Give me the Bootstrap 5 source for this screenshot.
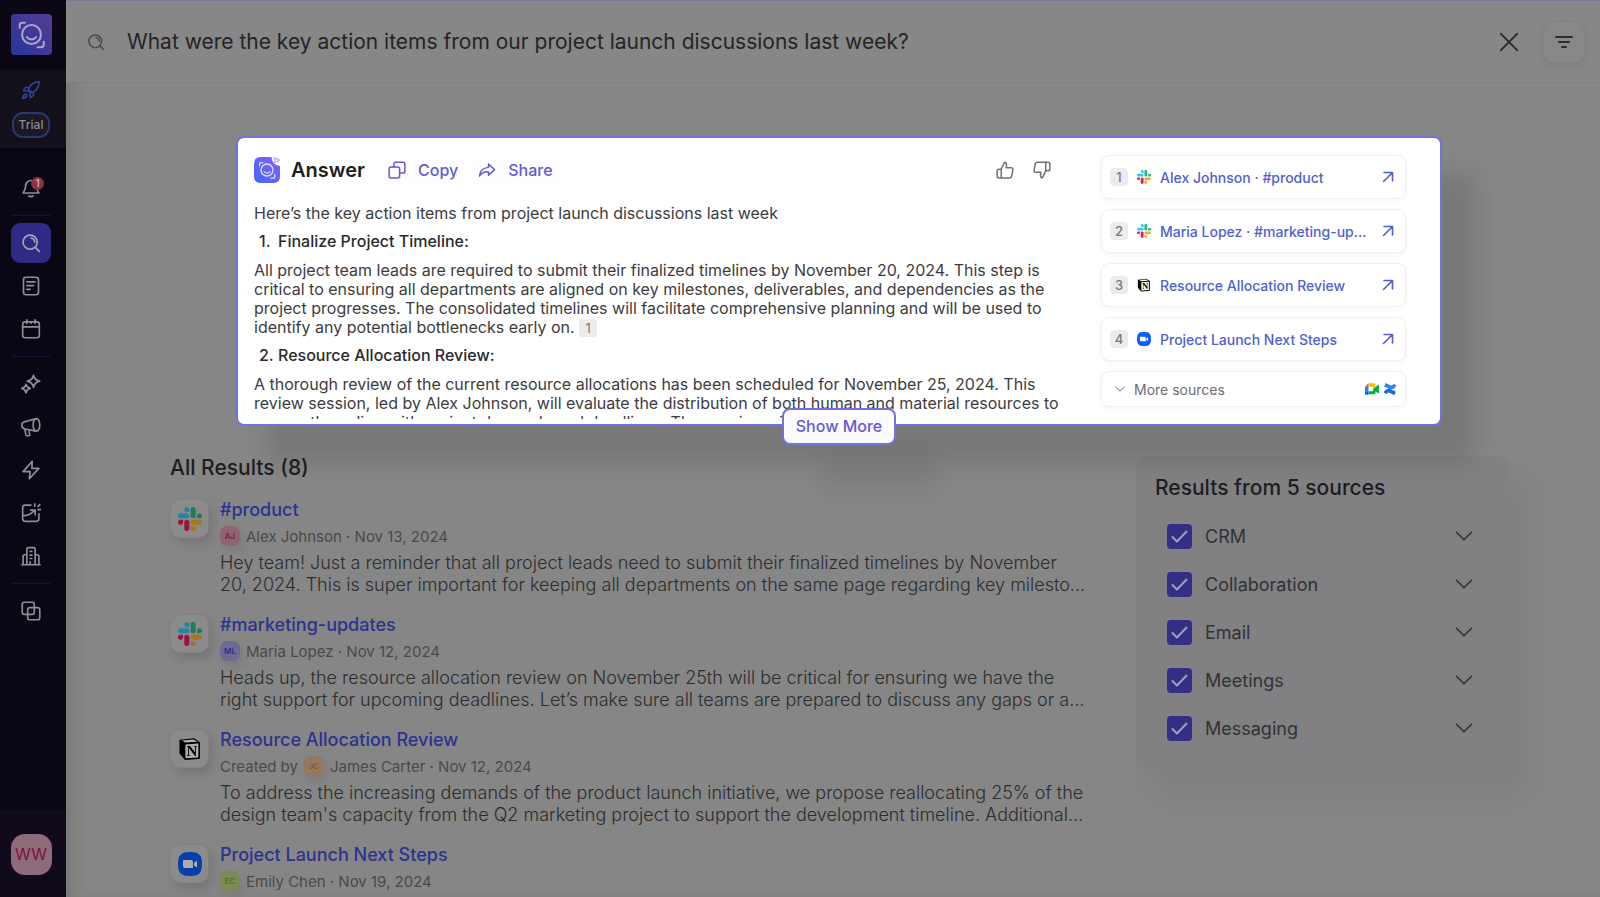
<!DOCTYPE html>
<html lang="en">
<head>
<meta charset="utf-8">
<meta name="viewport" content="width=device-width, initial-scale=1">
<title>Search results</title>
<link href="https://cdn.jsdelivr.net/npm/bootstrap@5.3.0/dist/css/bootstrap.min.css" rel="stylesheet">
<style>
:root{--page:#868686;--ink:#1d1d1f;--body:#3c3c3e;--muted:#4a4a4b;--link:#2b338f;--violet:#6459d6;--blue:#4f5fd3}
body{background:var(--page);color:var(--body);font-family:Inter,"Liberation Sans",sans-serif;font-size:16px;line-height:19px}
a{text-decoration:none}
.ico{fill:none;stroke:currentColor;stroke-width:2;stroke-linecap:round;stroke-linejoin:round;flex:none;display:block}
.s14{width:14px;height:14px}.s18{width:18px;height:18px}.s20{width:20px;height:20px}.s24{width:24px;height:24px}
/* side rail */
.rail{width:66px;background:#080713;color:#8f8d96}
.rail>div{padding-right:4px}
.rail-top{height:70px;padding-top:14px;background:#0b0714}
.rail-trial{height:78px;background:#13101b;color:#343f94;padding-top:10px;padding-bottom:10px}
.pill{width:38px;height:26px;border:2px solid #2c3770;border-radius:11px;background:#1a1824;color:#8f8d96;font-size:12px;line-height:22px;font-weight:500;padding:0}
.rail-btn{width:40px;height:40px;border:0;border-radius:9px;background:none;color:inherit;padding:0}
.rail-btn.current{background:#2f2a83;color:#a5a3b8}
.rail-rule{width:40px;height:1px;background:#15133a;margin:7px 0}
.stack3{gap:3px}
.bell-badge{top:9px;left:20px;width:13px;height:13px;border-radius:50%;background:#922f49;color:#bdb0b6;font-size:10px;line-height:13px;font-weight:600}
.rail-foot{height:87px;background:#100a1b;padding-top:24px}
.who{width:41px;height:41px;border:0;border-radius:14px;background:#8e6b7b;color:#7d1240;font-size:16px;padding:0}
/* top bar */
.topbar{height:83px;border-bottom:1px solid #7f7f7f;border-top:1px solid #7a7a8e;padding:0 15px 0 21px;background:#878787}
.query{background:none;border:0;color:#242424;font-size:21px;outline:0;padding:0;margin-left:22px}
.plain{background:none;border:0;padding:0;color:inherit}
.filter-btn{width:42px;height:42px;border:1px solid #808080;border-radius:9px;background:#888;color:#2e2e2e;margin-left:24px;box-shadow:0 4px 8px rgba(0,0,0,.04)}
.main-col{box-shadow:inset 12px 0 16px -8px rgba(0,0,0,.12)}
.content{padding:53px 92px 0 104px}
/* answer */
.answer{margin:0 66px;height:290px;background:#fff;border:2px solid #7272df;border-radius:8px;padding:16px 34px 0 16px;box-shadow:32px 38px 22px rgba(0,0,0,.11)}
.answer-copy{height:265px;overflow:hidden;margin-right:38px}
.answer-head{height:32px;margin-bottom:18px}
.answer-head h1{font-size:20px;line-height:26px;font-weight:600;color:#1e1e1e;margin:0 15px 0 11px}
.act{color:var(--violet);font-weight:500;font-size:16px;background:#fefdff;border:0;border-radius:6px;padding:4px 8px;gap:12px}
.votes{gap:19px;color:#707075;margin-right:12px}
.answer-copy p{margin:0 0 9px}
.answer-copy h2{font-size:16px;line-height:19px;font-weight:500;color:#2a2a2c;margin:0 0 10px 5px}
.answer-copy h2 span{width:19px}
.chip{display:inline-block;width:18px;height:18px;border-radius:4px;background:#ececec;color:#777;font-size:13px;line-height:18px;text-align:center;flex:none}
.sources{width:305px;gap:10px;font-size:14px;padding-top:1px}
.source{height:44px;border:1px solid #f0f0f1;border-radius:8px;padding:0 10px 0 8px;color:var(--blue);font-weight:500;box-shadow:0 2px 6px rgba(0,0,0,.04);background:#fff}
.source .app{margin:0 9px}
.source.more{height:36px;color:#6e6e70;font-weight:400;padding:0 8px 0 12px}
.show-more{position:absolute;left:50%;bottom:-21px;transform:translateX(-50%);height:37px;width:114px;padding:0;border:2px solid #7272df;border-radius:8px;background:#fcfbff;color:var(--violet);font-weight:500;font-size:16px;white-space:nowrap;box-shadow:40px 46px 22px rgba(0,0,0,.06)}
/* results */
.lower{gap:51px}
.h-res{font-size:21px;line-height:24px;font-weight:500;color:var(--ink)}
.all-h{margin:30px 0 17px}
.result{gap:11px;margin-bottom:16px}
.tile{width:39px;height:39px;border-radius:10px;background:#8b8b8b;border:1px solid #828282;margin-top:2px;box-shadow:4px 6px 10px rgba(0,0,0,.12);flex:none}
.tile svg{filter:brightness(.68)}
.result h3{font-size:18px;line-height:26px;font-weight:500;margin:0}
.result h3 a{color:var(--link)}
.meta{height:26px;font-size:15px;color:var(--muted);gap:6px}
.ava{width:20px;height:20px;border-radius:7px;font-size:8px;line-height:20px;font-weight:600;text-align:center;box-shadow:3px 5px 8px rgba(0,0,0,.08)}
.result p{font-size:18px;font-weight:300;line-height:22px;margin:3px 0 0;color:#2c2c2e;white-space:nowrap}
.results-col{min-width:0}
.facets{width:372px;height:314px;margin-top:30px;border-radius:10px;background:#818083;padding:20px 34px 0 19px;box-shadow:18px 24px 30px rgba(0,0,0,.05)}
.facets fieldset{margin:12px 0 0 12px}
.facet{height:48px;font-size:18px;color:#323234}
.facet .form-check-input{width:25px;height:25px;margin:0 13px 0 0;border:0;border-radius:4px;float:none}
.facet .form-check-input:checked{background-color:#352e88;background-image:url("data:image/svg+xml,%3csvg xmlns='http://www.w3.org/2000/svg' viewBox='0 0 25 25'%3e%3cpath d='M5.5 13 10 17.500 19.500 7.500' fill='none' stroke='%23a09fb4' stroke-width='2' stroke-linecap='round' stroke-linejoin='round'/%3e%3c/svg%3e")}
</style>
</head>
<body class="vh-100 overflow-hidden">
<svg class="position-absolute" width="0" height="0" aria-hidden="true">
  <linearGradient id="gDim" x1="0" y1="1" x2="1" y2="0"><stop stop-color="#24389a"/><stop offset=".5" stop-color="#3f3798"/><stop offset="1" stop-color="#563c93"/></linearGradient>
  <linearGradient id="gLit" x1="0" y1="1" x2="1" y2="0"><stop stop-color="#4168f5"/><stop offset="1" stop-color="#8560ff"/></linearGradient>
  <symbol id="face" viewBox="0 0 40 40"><circle cx="20" cy="20" r="9.200"/><path d="M15.500 22.500c2.500 3 6.500 3 9 0M8.500 13.500V11q0-2.500 2.500-2.500h2.500M32 27v2.500q0 3-3 3h-3"/></symbol>
  <symbol id="search" viewBox="0 0 24 24"><circle cx="11" cy="11" r="8.500"/><path d="m17.500 17.500 4.500 4.500M12 6a5.500 5.500 0 0 1 4.500 5"/></symbol>
  <symbol id="down" viewBox="0 0 24 24"><path d="m3 7.500 9 9 9-9"/></symbol>
  <symbol id="out" viewBox="0 0 14 14"><path stroke-width="1.600" d="M2.500 11.500 11.500 2.500M3 2.500h8.500V11"/></symbol>
  <symbol id="slack" viewBox="0 0 24 24"><g stroke="none"><path fill="#e01e5a" d="M5.042 15.165a2.528 2.528 0 0 1-2.52 2.523A2.528 2.528 0 0 1 0 15.165a2.527 2.527 0 0 1 2.522-2.520h2.520v2.520zM6.313 15.165a2.527 2.527 0 0 1 2.521-2.520 2.527 2.527 0 0 1 2.521 2.520v6.313A2.528 2.528 0 0 1 8.834 24a2.528 2.528 0 0 1-2.521-2.522v-6.313z"/><path fill="#36c5f0" d="M8.834 5.042a2.528 2.528 0 0 1-2.521-2.520A2.528 2.528 0 0 1 8.834 0a2.528 2.528 0 0 1 2.521 2.522v2.520H8.834zM8.834 6.313a2.528 2.528 0 0 1 2.521 2.521 2.528 2.528 0 0 1-2.521 2.521H2.522A2.528 2.528 0 0 1 0 8.834a2.528 2.528 0 0 1 2.522-2.521h6.312z"/><path fill="#2eb67d" d="M18.956 8.834a2.528 2.528 0 0 1 2.522-2.521A2.528 2.528 0 0 1 24 8.834a2.528 2.528 0 0 1-2.522 2.521h-2.522V8.834zM17.688 8.834a2.528 2.528 0 0 1-2.523 2.521 2.527 2.527 0 0 1-2.520-2.521V2.522A2.527 2.527 0 0 1 15.165 0a2.528 2.528 0 0 1 2.523 2.522v6.312z"/><path fill="#ecb22e" d="M15.165 18.956a2.528 2.528 0 0 1 2.523 2.522A2.528 2.528 0 0 1 15.165 24a2.527 2.527 0 0 1-2.520-2.522v-2.522h2.520zM15.165 17.688a2.527 2.527 0 0 1-2.520-2.523 2.526 2.526 0 0 1 2.520-2.520h6.313A2.527 2.527 0 0 1 24 15.165a2.528 2.528 0 0 1-2.522 2.523h-6.313z"/></g></symbol>
  <symbol id="notion" viewBox="0 0 24 24"><path d="M1.500 2.800 16 1.300l6 4v15.500q0 1.200-1.300 1.300L7 23l-5.500-6.500z" fill="#000" stroke="none"/><path d="M4 3.500 15.500 2.600l4 2.200L7 5.600zM7.400 7.400l13-.800v13.800l-13 .900z" fill="#fff" stroke="none"/><text x="8.500" y="19" font-family="Liberation Serif" font-weight="700" font-size="15" fill="#000" stroke="none">N</text></symbol>
  <symbol id="zoomapp" viewBox="0 0 24 24"><path d="M12 0c9 0 12 3 12 12s-3 12-12 12S0 21 0 12 3 0 12 0" fill="#0b5cff" stroke="none"/><path d="M5 8h8q2 0 2 2v6H7q-2 0-2-2zM16 11l3-2.500v7L16 13.500z" fill="#fff" stroke="none"/></symbol>
  <symbol id="meet" viewBox="0 0 24 20"><g stroke="none"><path fill="#fff" d="M5 5h11v10H5z"/><path fill="#ea4335" d="M0 6 6 0v6z"/><path fill="#fbbc04" d="M6 0h10q2 0 2 2v6l-4 2V6H6z"/><path fill="#2684fc" d="M0 6h6v8H0z"/><path fill="#0066da" d="M0 14h6v6H2q-2 0-2-2z"/><path fill="#00ac47" d="M6 14h8v-4l4-3 4-4q2-1 2 1v12q0 2-2 1l-4-3v3q0 2-2 2H6z"/></g></symbol>
  <symbol id="conf" viewBox="0 0 24 24"><g stroke="none"><path fill="#1868db" d="M1 17.500q5-8 11.500-5.500l9.500 4.500-2.500 6q-4-2-8.500-4-3.500-1.500-5.500 2.500z"/><path fill="#2684ff" d="M23 6.500q-5 8-11.500 5.500L2 7.500l2.500-6q4 2 8.500 4 3.500 1.500 5.500-2.500z"/></g></symbol>
</svg>

<div class="d-flex h-100">
  <nav class="rail d-flex flex-column flex-shrink-0" aria-label="Main">
    <div class="rail-top d-flex justify-content-center">
      <a href="#" aria-label="Home"><svg width="41" height="41" viewBox="0 0 40 40" class="ico"><rect width="40" height="40" rx="4" fill="url(#gDim)" stroke="none"/><use href="#face" width="40" height="40" style="color:#aaa6c8"/></svg></a>
    </div>
    <div class="rail-trial d-flex flex-column align-items-center justify-content-between">
      <button class="plain" aria-label="Get started"><svg class="ico s20" viewBox="0 0 24 24"><path d="M8.500 12.500C10 7 14.500 2.500 22 2c-.5 7.500-5 12-10.500 13.500zM9 9H5.500L3 12.500l4.500 1M15 15v3.500L11.500 21l-1-4.500M5.500 16.500C3 17.500 2.500 19.500 2 22c2.500-.5 4.500-1 5.500-3.500zM9.500 11.500l3 3"/></svg></button>
      <button class="pill">Trial</button>
    </div>
    <div class="d-flex flex-column align-items-center flex-grow-1 pt-1 mt-3">
      <button class="rail-btn d-grid position-relative" aria-label="Notifications"><svg class="ico s20 m-auto" viewBox="0 0 24 24"><path d="M5.500 9.500a6.500 6.500 0 0 1 13 0c0 5 1.500 6 3 8.500h-19c1.500-2.500 3-3.500 3-8.500M9.500 21.500q2.500 1.500 5 0"/></svg><span class="bell-badge position-absolute">1</span></button>
      <div class="rail-rule"></div>
      <div class="d-flex flex-column stack3">
        <button class="rail-btn current d-grid" aria-label="Search"><svg class="ico s20 m-auto"><use href="#search"/></svg></button>
        <button class="rail-btn d-grid" aria-label="Documents"><svg class="ico s20 m-auto" viewBox="0 0 24 24"><rect x="3" y="1.500" width="18" height="21" rx="3"/><path d="M7 7h10M7 11.500h8M7 16h4"/></svg></button>
        <button class="rail-btn d-grid" aria-label="Calendar"><svg class="ico s20 m-auto" viewBox="0 0 24 24"><rect x="2" y="3.500" width="20" height="19" rx="3"/><path d="M2 9.500h20M7 1v4.500M17 1v4.500M12 3v2"/></svg></button>
      </div>
      <div class="rail-rule"></div>
      <div class="d-flex flex-column stack3">
        <button class="rail-btn d-grid" aria-label="Assistant"><svg class="ico s20 m-auto" viewBox="0 0 24 24"><path d="M15 1.500q1.200 6 7.500 7-6.300 1.200-7.500 7.500-1.200-6.300-7.500-7.500 6.300-1 7.500-7zM6 12.500q.8 4 5 4.800-4.200.8-5 5.200-.8-4.400-5-5.200 4.200-.8 5-4.800z"/></svg></button>
        <button class="rail-btn d-grid" aria-label="Announcements"><svg class="ico s20 m-auto" viewBox="0 0 24 24"><ellipse cx="18.500" cy="9.500" rx="4" ry="7.500"/><path d="M18.500 2 5 5.500q-4 .5-4 4.500t4 4.500l13.500 2.500M4.500 14.500l1.500 7q.3 1 1.500 1H9q1.500 0 1.300-1.500L9.500 15.500"/></svg></button>
        <button class="rail-btn d-grid" aria-label="Actions"><svg class="ico s20 m-auto" viewBox="0 0 24 24"><path d="M13.500 1.500 2.500 14H11l-1 8.500L21.500 10H13z"/></svg></button>
        <button class="rail-btn d-grid" aria-label="Insights"><svg class="ico s20 m-auto" viewBox="0 0 24 24"><path d="M12 2.500H5q-3 0-3 3V19q0 3 3 3h13.500q3 0 3-3v-6M2 15q8 1 14-6M11.500 8.500H17V14M16.500 1v3M22.500 2l-2 2M20.500 8h3"/></svg></button>
        <button class="rail-btn d-grid" aria-label="Company"><svg class="ico s20 m-auto" viewBox="0 0 24 24"><path d="M1 22.500h22M2.500 22V12.500q0-2 2-2H7M21.500 22V12.500q0-2-2-2H17M7 22V4q0-2 2-2h6q2 0 2 2v18M11 6.500h2M11 11h2M11 15h2M11 19v3"/></svg></button>
      </div>
      <div class="rail-rule"></div>
      <button class="rail-btn d-grid" aria-label="Collections"><svg class="ico s20 m-auto" viewBox="0 0 24 24"><rect x="1.500" y="1.500" width="14.500" height="14.500" rx="2.500"/><rect x="8" y="8" width="14.500" height="14.500" rx="2.500"/></svg></button>
    </div>
    <div class="rail-foot d-flex justify-content-center"><button class="who">WW</button></div>
  </nav>

  <div class="main-col flex-grow-1 overflow-hidden">
    <header class="topbar d-flex align-items-center">
      <svg class="ico s18" style="color:#4a4a4a"><use href="#search"/></svg>
      <input class="query flex-grow-1" aria-label="Search" value="What were the key action items from our project launch discussions last week?">
      <button class="plain" aria-label="Clear"><svg class="ico s20" viewBox="0 0 24 24" style="color:#262626"><path d="M2 2l20 20M22 2 2 22"/></svg></button>
      <button class="filter-btn d-grid p-0" aria-label="Filters"><svg class="ico s18 m-auto" viewBox="0 0 18 18"><path d="M1 4h16M4 9h10M7 14h4"/></svg></button>
    </header>

    <main class="content">
      <section class="answer position-relative d-flex">
        <div class="answer-copy flex-grow-1">
          <div class="answer-head d-flex align-items-center">
            <svg width="26" height="26" viewBox="0 0 40 40" class="ico"><path fill="url(#gLit)" stroke="none" d="M10 0h17q0 12 13 14v16q0 10-10 10H10Q0 40 0 30V10Q0 0 10 0"/><use href="#face" width="40" height="40" style="color:#e4e0ff"/><path d="m31 1 2 4-2 4M34 2l5 3-5 3" stroke="#8a74f0" stroke-width="1.500"/></svg>
            <h1>Answer</h1>
            <button class="act d-flex align-items-center"><svg class="ico s18" viewBox="0 0 24 24"><rect x="1.500" y="8" width="14" height="14.500" rx="2.500"/><path d="M8 8V4q0-2.500 2.500-2.500H20q2.500 0 2.500 2.500v9.500q0 2.500-2.500 2.500h-4.500"/></svg>Copy</button>
            <button class="act d-flex align-items-center ms-1"><svg class="ico s18" viewBox="0 0 24 24"><path d="m14 4 8 7.500-8 7.500v-4.500Q6 14 2 20q.5-10.500 12-11.500z"/></svg>Share</button>
            <div class="votes d-flex ms-auto">
              <button class="plain" aria-label="Good answer"><svg class="ico s18" viewBox="0 0 24 24"><path d="M7 11 11.500 1.500q3 .5 2.500 4L13.500 9h6.500q3 0 2.500 3L21 20q-.5 2.500-3 2.500H4.500Q1.500 22.500 1.500 20v-6.500Q1.500 11 4 11h3v11"/></svg></button>
              <button class="plain" aria-label="Bad answer"><svg class="ico s18" viewBox="0 0 24 24"><path d="M17 13 12.500 22.500q-3-.5-2.500-4l.5-3.500H4q-3 0-2.500-3L3 4q.5-2.500 3-2.500h13.500q3 0 3 2.500v6.500q0 2.500-2.500 2.500h-3v-11"/></svg></button>
            </div>
          </div>
          <p>Here’s the key action items from project launch discussions last week</p>
          <h2 class="d-flex"><span>1.</span>Finalize Project Timeline:</h2>
          <p>All project team leads are required to submit their finalized timelines by November 20, 2024. This step is<br>critical to ensuring all departments are aligned on key milestones, deliverables, and dependencies as the<br>project progresses. The consolidated timelines will facilitate comprehensive planning and will be used to<br>identify any potential bottlenecks early on. <span class="chip">1</span></p>
          <h2 class="d-flex"><span>2.</span>Resource Allocation Review:</h2>
          <p class="text-nowrap">A thorough review of the current resource allocations has been scheduled for November 25, 2024. This<br>review session, led by Alex Johnson, will evaluate the distribution of both human and material resources to<br>ensure they align with project demands and deadlines. The session will</p>
        </div>
        <div class="sources d-flex flex-column flex-shrink-0">
          <a class="source d-flex align-items-center" href="#"><span class="chip">1</span><svg class="s14 app flex-shrink-0"><use href="#slack"/></svg><span class="flex-grow-1">Alex Johnson · #product</span><svg class="ico s14"><use href="#out"/></svg></a>
          <a class="source d-flex align-items-center" href="#"><span class="chip">2</span><svg class="s14 app flex-shrink-0"><use href="#slack"/></svg><span class="flex-grow-1">Maria Lopez · #marketing-up...</span><svg class="ico s14"><use href="#out"/></svg></a>
          <a class="source d-flex align-items-center" href="#"><span class="chip">3</span><svg class="s14 app flex-shrink-0"><use href="#notion"/></svg><span class="flex-grow-1">Resource Allocation Review</span><svg class="ico s14"><use href="#out"/></svg></a>
          <a class="source d-flex align-items-center" href="#"><span class="chip">4</span><svg class="s14 app flex-shrink-0"><use href="#zoomapp"/></svg><span class="flex-grow-1">Project Launch Next Steps</span><svg class="ico s14"><use href="#out"/></svg></a>
          <button class="source more d-flex align-items-center text-start"><svg class="ico" width="12" height="12"><use href="#down"/></svg><span class="flex-grow-1 ms-2">More sources</span><svg class="s14 me-1"><use href="#meet"/></svg><svg class="s14"><use href="#conf"/></svg></button>
        </div>
        <button class="show-more">Show More</button>
      </section>

      <div class="lower d-flex align-items-start">
        <section class="results-col flex-grow-1">
          <h2 class="h-res all-h">All Results (8)</h2>
          <article class="result d-flex">
            <span class="tile d-grid"><svg class="s24 m-auto"><use href="#slack"/></svg></span>
            <div><h3><a href="#">#product</a></h3>
              <div class="meta d-flex align-items-center"><span class="ava" style="background:#8d6470;color:#7c2144">AJ</span><span>Alex Johnson · Nov 13, 2024</span></div>
              <p>Hey team! Just a reminder that all project leads need to submit their finalized timelines by November<br>20, 2024. This is super important for keeping all departments on the same page regarding key milesto...</p></div>
          </article>
          <article class="result d-flex">
            <span class="tile d-grid"><svg class="s24 m-auto"><use href="#slack"/></svg></span>
            <div><h3><a href="#">#marketing-updates</a></h3>
              <div class="meta d-flex align-items-center"><span class="ava" style="background:#6d6a94;color:#30298a">ML</span><span>Maria Lopez · Nov 12, 2024</span></div>
              <p>Heads up, the resource allocation review on November 25th will be critical for ensuring we have the<br>right support for upcoming deadlines. Let’s make sure all teams are prepared to discuss any gaps or a...</p></div>
          </article>
          <article class="result d-flex">
            <span class="tile d-grid"><svg class="s24 m-auto"><use href="#notion"/></svg></span>
            <div><h3><a href="#">Resource Allocation Review</a></h3>
              <div class="meta d-flex align-items-center"><span>Created by</span><span class="ava" style="background:#94785f;color:#8a5520">JC</span><span>James Carter · Nov 12, 2024</span></div>
              <p>To address the increasing demands of the product launch initiative, we propose reallocating 25% of the<br>design team's capacity from the Q2 marketing project to support the development timeline. Additional...</p></div>
          </article>
          <article class="result d-flex">
            <span class="tile d-grid"><svg class="s24 m-auto"><use href="#zoomapp"/></svg></span>
            <div><h3><a href="#">Project Launch Next Steps</a></h3>
              <div class="meta d-flex align-items-center"><span class="ava" style="background:#7c8a55;color:#52702a">EC</span><span>Emily Chen · Nov 19, 2024</span></div></div>
          </article>
        </section>
        <aside class="facets flex-shrink-0">
          <h2 class="h-res m-0">Results from 5 sources</h2>
          <fieldset>
            <div class="facet d-flex align-items-center"><input class="form-check-input" type="checkbox" id="f1" checked><label for="f1">CRM</label><button class="plain ms-auto" aria-label="Expand CRM"><svg class="ico s20"><use href="#down"/></svg></button></div>
            <div class="facet d-flex align-items-center"><input class="form-check-input" type="checkbox" id="f2" checked><label for="f2">Collaboration</label><button class="plain ms-auto" aria-label="Expand Collaboration"><svg class="ico s20"><use href="#down"/></svg></button></div>
            <div class="facet d-flex align-items-center"><input class="form-check-input" type="checkbox" id="f3" checked><label for="f3">Email</label><button class="plain ms-auto" aria-label="Expand Email"><svg class="ico s20"><use href="#down"/></svg></button></div>
            <div class="facet d-flex align-items-center"><input class="form-check-input" type="checkbox" id="f4" checked><label for="f4">Meetings</label><button class="plain ms-auto" aria-label="Expand Meetings"><svg class="ico s20"><use href="#down"/></svg></button></div>
            <div class="facet d-flex align-items-center"><input class="form-check-input" type="checkbox" id="f5" checked><label for="f5">Messaging</label><button class="plain ms-auto" aria-label="Expand Messaging"><svg class="ico s20"><use href="#down"/></svg></button></div>
          </fieldset>
        </aside>
      </div>
    </main>
  </div>
</div>
<script src="https://cdn.jsdelivr.net/npm/bootstrap@5.3.0/dist/js/bootstrap.bundle.min.js"></script>
</body>
</html>
